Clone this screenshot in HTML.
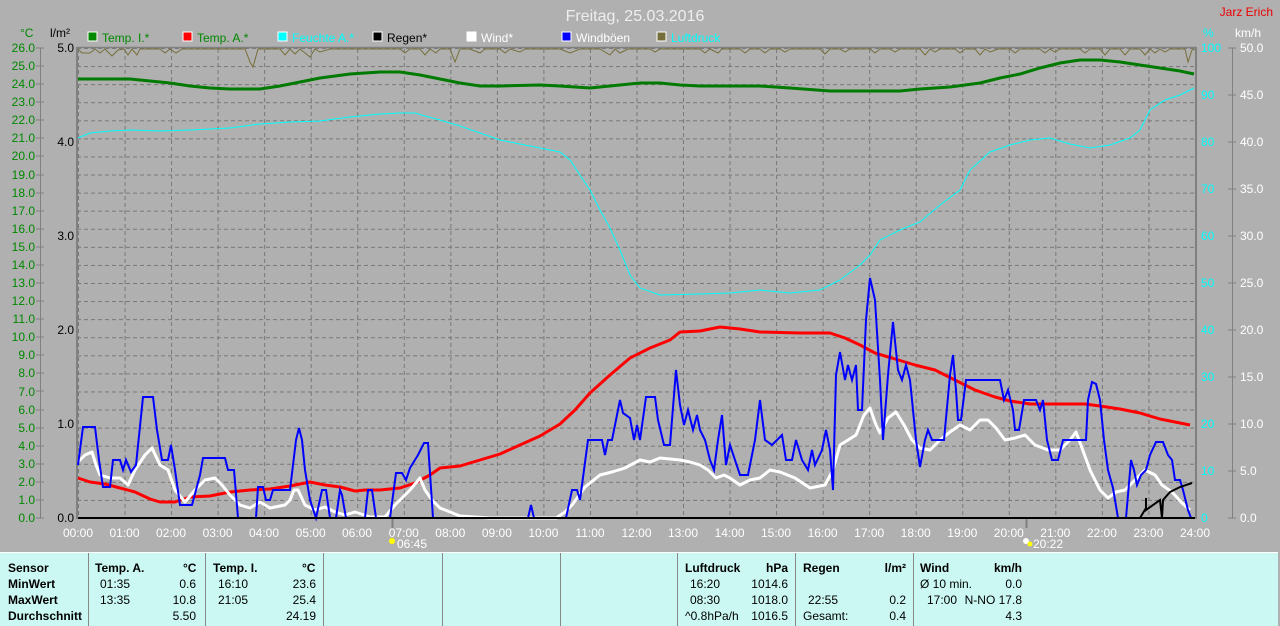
<!DOCTYPE html>
<html><head><meta charset="utf-8"><style>
html,body{margin:0;padding:0;width:1280px;height:625px;overflow:hidden;background:#b0b0b0}
svg{display:block;font-family:"Liberation Sans",sans-serif}
.p{position:absolute;left:0;top:552px;width:1278px;height:73px;background:#ccf8f4;border-top:1px solid #fff;font-family:"Liberation Sans",sans-serif;font-size:12px;color:#000}
.c{position:absolute;top:0;height:73px;border-left:1px solid #888}
.t{position:absolute;white-space:nowrap}
.b{font-weight:bold}
</style></head><body>
<svg width="1280" height="625" viewBox="0 0 1280 625">
<defs>
<pattern id="hg" x="0" y="48" width="1280" height="18.077" patternUnits="userSpaceOnUse"><line x1="0" y1="0.5" x2="1280" y2="0.5" stroke="#777" stroke-dasharray="4,3"/></pattern>
<pattern id="vg" x="78" y="0" width="46.54" height="625" patternUnits="userSpaceOnUse"><line x1="0.5" y1="0" x2="0.5" y2="625" stroke="#777" stroke-dasharray="4,3"/></pattern>
</defs>
<text x="635" y="21" fill="#eee" font-size="16" text-anchor="middle">Freitag, 25.03.2016</text>
<text x="1273" y="16" fill="#e00" font-size="12" text-anchor="end">Jarz Erich</text>
<g font-size="12">
<text x="20" y="37" fill="#080">°C</text><text x="50" y="37" fill="#000">l/m²</text>
<text x="1203" y="37" fill="#0ff">%</text><text x="1235" y="37" fill="#fff">km/h</text>
<rect x="88" y="32" width="9" height="9" fill="#080" stroke="#fff"/><text x="102" y="42" fill="#080">Temp. I.*</text>
<rect x="183" y="32" width="9" height="9" fill="#f00" stroke="#fff"/><text x="197" y="42" fill="#080">Temp. A.*</text>
<rect x="278" y="32" width="9" height="9" fill="#0ff" stroke="#fff"/><text x="292" y="42" fill="#0ff">Feuchte A.*</text>
<rect x="373" y="32" width="9" height="9" fill="#000" stroke="#fff"/><text x="387" y="42" fill="#000">Regen*</text>
<rect x="467" y="32" width="9" height="9" fill="#fff" stroke="#fff"/><text x="481" y="42" fill="#fff">Wind*</text>
<rect x="562" y="32" width="9" height="9" fill="#00f" stroke="#fff"/><text x="576" y="42" fill="#fff">Windböen</text>
<rect x="657" y="32" width="9" height="9" fill="#776f3a" stroke="#fff"/><text x="671" y="42" fill="#0ff">Luftdruck</text>
</g>
<rect x="78" y="48" width="1117" height="470" fill="url(#hg)"/>
<rect x="78" y="48" width="1117" height="470" fill="url(#vg)"/>
<line x1="77" y1="47" x2="77" y2="519" stroke="#808080" stroke-width="2"/>
<line x1="1196" y1="47" x2="1196" y2="519" stroke="#808080" stroke-width="2"/>
<line x1="77" y1="47.5" x2="1196" y2="47.5" stroke="#808080" stroke-width="1.5"/>
<line x1="40.5" y1="48" x2="40.5" y2="518" stroke="#808080"/>
<line x1="1232.5" y1="48" x2="1232.5" y2="518" stroke="#808080"/>
<g font-size="12" fill="#080" text-anchor="end">
<text x="35" y="52">26.0</text><text x="35" y="70">25.0</text><text x="35" y="88">24.0</text><text x="35" y="106">23.0</text><text x="35" y="124">22.0</text><text x="35" y="142">21.0</text><text x="35" y="160">20.0</text><text x="35" y="179">19.0</text><text x="35" y="197">18.0</text><text x="35" y="215">17.0</text><text x="35" y="233">16.0</text><text x="35" y="251">15.0</text><text x="35" y="269">14.0</text><text x="35" y="287">13.0</text><text x="35" y="305">12.0</text><text x="35" y="323">11.0</text><text x="35" y="341">10.0</text><text x="35" y="359">9.0</text><text x="35" y="377">8.0</text><text x="35" y="396">7.0</text><text x="35" y="414">6.0</text><text x="35" y="432">5.0</text><text x="35" y="450">4.0</text><text x="35" y="468">3.0</text><text x="35" y="486">2.0</text><text x="35" y="504">1.0</text><text x="35" y="522">0.0</text>
</g>
<path d="M36 48h8M36 66h8M36 84h8M36 102h8M36 120h8M36 138h8M36 156h8M36 175h8M36 193h8M36 211h8M36 229h8M36 247h8M36 265h8M36 283h8M36 301h8M36 319h8M36 337h8M36 355h8M36 373h8M36 391h8M36 410h8M36 428h8M36 446h8M36 464h8M36 482h8M36 500h8M36 518h8" stroke="#808080"/>
<g font-size="12" fill="#000" text-anchor="end">
<text x="74" y="52">5.0</text><text x="74" y="146">4.0</text><text x="74" y="240">3.0</text><text x="74" y="334">2.0</text><text x="74" y="428">1.0</text><text x="74" y="522">0.0</text>
</g>
<g font-size="12" fill="#0ff">
<text x="1201" y="52">100</text><text x="1201" y="99">90</text><text x="1201" y="146">80</text><text x="1201" y="193">70</text><text x="1201" y="240">60</text><text x="1201" y="287">50</text><text x="1201" y="334">40</text><text x="1201" y="381">30</text><text x="1201" y="428">20</text><text x="1201" y="475">10</text><text x="1201" y="522">0</text>
</g>
<path d="M1228 48h8M1228 95h8M1228 142h8M1228 189h8M1228 236h8M1228 283h8M1228 330h8M1228 377h8M1228 424h8M1228 471h8M1228 518h8" stroke="#808080"/>
<g font-size="12" fill="#fff">
<text x="1240" y="52">50.0</text><text x="1240" y="99">45.0</text><text x="1240" y="146">40.0</text><text x="1240" y="193">35.0</text><text x="1240" y="240">30.0</text><text x="1240" y="287">25.0</text><text x="1240" y="334">20.0</text><text x="1240" y="381">15.0</text><text x="1240" y="428">10.0</text><text x="1240" y="475">5.0</text><text x="1240" y="522">0.0</text>
</g>
<g font-size="12" fill="#fff" text-anchor="middle">
<text x="78" y="537">00:00</text><text x="124.5" y="537">01:00</text><text x="171" y="537">02:00</text><text x="217.6" y="537">03:00</text><text x="264" y="537">04:00</text><text x="310.7" y="537">05:00</text><text x="357" y="537">06:00</text><text x="403.8" y="537">07:00</text><text x="450.3" y="537">08:00</text><text x="496.9" y="537">09:00</text><text x="543.4" y="537">10:00</text><text x="590" y="537">11:00</text><text x="636.5" y="537">12:00</text><text x="683" y="537">13:00</text><text x="729.6" y="537">14:00</text><text x="776" y="537">15:00</text><text x="822.6" y="537">16:00</text><text x="869.2" y="537">17:00</text><text x="915.7" y="537">18:00</text><text x="962.3" y="537">19:00</text><text x="1008.8" y="537">20:00</text><text x="1055.3" y="537">21:00</text><text x="1101.9" y="537">22:00</text><text x="1148.4" y="537">23:00</text><text x="1195" y="537">24:00</text>
</g>
<line x1="392.5" y1="519" x2="392.5" y2="528" stroke="#808080" stroke-width="2"/>
<line x1="1026.5" y1="519" x2="1026.5" y2="528" stroke="#808080" stroke-width="2"/>
<circle cx="392" cy="541" r="3" fill="#ff0"/><text x="397" y="548" font-size="12" fill="#fff">06:45</text>
<circle cx="1026" cy="541" r="3" fill="#fff"/><circle cx="1030" cy="544" r="2.5" fill="#ff0"/><text x="1033" y="548" font-size="12" fill="#fff">20:22</text>
<polyline fill="none" stroke="#776f3a" stroke-width="1" points="78,49 82,53 90,53 95,49 100,53 105,49 112,56 118,50 124,49 128,55 132,49 137,55 140,49 160,49 165,53 170,49 176,53 182,49 190,49 245,49 250,62 253,67 258,49 280,49 285,55 290,49 295,54 300,49 310,57 315,49 320,52 330,49 400,49 405,53 410,49 420,49 425,55 430,49 436,53 440,49 450,49 455,62 460,49 470,49 480,53 485,49 500,49 505,53 510,49 520,52 525,49 560,49 570,53 580,49 600,49 610,55 615,49 620,53 628,49 650,49 655,52 660,49 700,49 705,53 710,49 718,53 722,49 740,49 745,53 750,49 760,49 765,53 770,49 780,49 785,52 790,49 820,49 825,54 830,49 840,49 845,52 850,49 870,49 875,53 880,49 890,49 895,52 900,49 920,49 925,55 930,49 935,52 940,49 955,49 960,53 965,49 975,49 980,55 985,49 990,52 998,49 1010,49 1015,53 1020,49 1040,49 1045,53 1050,49 1055,52 1060,49 1080,49 1085,53 1090,49 1100,49 1105,55 1110,49 1120,49 1125,55 1130,49 1140,49 1145,55 1150,49 1155,53 1160,49 1165,52 1170,49 1185,49 1188,62 1192,50 1195,49"/>
<polyline fill="none" stroke="#0b0" stroke-width="1" stroke-opacity="0" points="0,0"/>
<polyline fill="none" stroke="#0ff" stroke-width="1" points="78,138 90,133 110,131 130,130 160,131 190,130 230,128 260,124 290,122 320,121 350,117 380,114 400,113 415,113 425,116 440,120 460,126 480,133 500,140 520,144 545,149 560,152 570,160 580,175 590,190 600,210 610,228 620,250 630,275 640,288 660,295 700,294 730,293 760,290 790,293 820,290 840,280 860,265 870,255 880,240 900,230 920,222 940,205 960,190 970,170 990,152 1010,145 1030,140 1050,138 1070,144 1090,148 1110,145 1130,138 1140,130 1150,110 1165,100 1180,95 1194,88"/>
<polyline fill="none" stroke="#007a00" stroke-width="3" points="78,79 130,79 150,81 170,83 190,86 210,88 230,89 260,89 280,86 300,82 320,78 350,74 380,72 400,72 420,75 440,79 460,83 480,86 500,86 540,85 560,86 590,88 610,86 640,83 660,83 680,85 700,86 760,86 790,88 830,91 860,91 900,91 920,89 950,87 980,83 1000,78 1020,74 1040,68 1060,63 1080,60 1100,60 1120,62 1140,65 1160,68 1180,71 1194,74"/>
<polyline fill="none" stroke="#f00" stroke-width="3" stroke-linejoin="round" points="78,478 90,482 105,484 120,488 135,492 150,499 160,502 175,502 190,497 210,496 230,492 250,490 270,489 290,486 300,484 310,482 325,485 340,487 355,491 365,490 380,490 400,488 415,483 430,475 440,468 460,466 480,460 500,454 520,445 540,436 560,424 575,410 590,393 610,375 630,358 650,348 670,340 680,332 700,331 720,327 740,329 760,332 800,333 830,333 845,338 860,345 875,353 895,359 915,365 935,370 955,380 975,390 995,397 1010,401 1030,404 1060,404 1085,404 1100,406 1120,409 1140,413 1160,419 1175,422 1190,425"/>
<polyline fill="none" stroke="#fff" stroke-width="3" stroke-linejoin="round" points="78,462 85,455 92,452 96,465 100,475 110,478 120,478 128,485 135,470 145,455 152,448 160,465 168,470 175,490 185,502 195,490 205,480 215,478 222,485 230,495 240,505 250,508 260,502 270,508 285,505 290,500 294,490 298,490 305,505 315,510 325,507 335,512 345,515 355,512 370,517 385,517 395,505 410,490 420,478 425,490 432,500 440,508 460,516 490,518 556,518 565,512 572,505 585,487 600,475 612,472 625,468 640,460 650,462 660,458 680,460 690,462 700,465 708,470 716,478 724,475 730,478 740,485 750,480 760,478 770,470 780,472 795,478 810,488 825,485 833,470 840,445 848,440 856,435 864,415 870,408 876,425 880,433 888,418 896,412 904,425 912,440 920,448 930,450 940,440 950,432 960,425 970,430 980,420 988,420 996,428 1005,440 1015,438 1025,435 1035,445 1048,450 1060,450 1070,440 1076,432 1082,448 1090,470 1100,490 1108,498 1116,492 1125,490 1135,480 1145,470 1155,475 1162,485 1172,492 1182,503 1190,510"/>
<polyline fill="none" stroke="#00f" stroke-width="2" points="78,465 83,427 95,427 99,460 103,487 110,487 113,460 120,460 123,470 126,460 131,472 136,465 143,397 153,397 157,430 162,460 168,460 171,445 175,470 180,505 192,505 200,475 203,458 225,458 228,470 234,470 238,518 256,518 258,487 263,487 266,500 270,500 273,490 290,490 296,440 299,428 302,440 305,470 310,500 316,518 322,490 326,490 330,518 336,518 340,490 342,495 346,518 365,518 368,490 372,490 376,518 390,518 396,473 402,473 406,480 410,468 418,455 424,443 428,443 433,518 528,518 531,505 534,518 566,518 572,490 577,490 580,500 588,440 602,440 605,455 608,440 612,440 620,400 623,413 630,418 634,440 637,425 640,440 646,397 655,397 658,420 664,445 670,445 676,370 680,405 684,425 688,410 693,430 697,415 700,430 705,440 710,460 714,470 718,440 722,415 726,465 730,445 740,475 748,475 755,440 760,400 765,440 772,445 782,435 786,460 792,460 796,440 802,460 808,470 812,450 815,465 822,450 826,430 830,450 833,490 836,375 840,352 845,380 848,365 852,380 856,365 858,410 862,410 866,320 870,278 875,300 880,380 883,440 888,375 893,322 898,370 902,380 906,365 910,380 916,440 920,467 925,440 928,430 932,440 944,440 950,375 953,355 956,390 958,420 961,420 966,380 1000,380 1004,400 1008,390 1013,410 1015,430 1019,430 1024,400 1036,400 1040,410 1043,400 1047,440 1052,460 1058,460 1063,440 1086,440 1088,400 1092,382 1096,384 1100,400 1104,440 1108,470 1113,488 1118,518 1126,518 1128,495 1131,460 1134,470 1137,485 1141,475 1146,470 1150,455 1156,442 1163,442 1168,455 1172,460 1175,480 1180,480 1183,490 1188,510 1191,518 1195,518"/>
<line x1="78" y1="518" x2="1195" y2="518" stroke="#000" stroke-width="2"/>
<polyline fill="none" stroke="#000" stroke-width="2" points="1140,518 1146,508 1146,498 1146,510 1160,500 1162,518 1163,500 1170,492 1180,487 1192,483"/>
</svg>
<div class="p">
<div class="c" style="left:88px"></div><div class="c" style="left:205px"></div><div class="c" style="left:323px"></div><div class="c" style="left:442px"></div><div class="c" style="left:560px"></div><div class="c" style="left:677px"></div><div class="c" style="left:795px"></div><div class="c" style="left:913px"></div>
<div class="t b" style="left:8px;top:8px">Sensor</div>
<div class="t b" style="left:8px;top:24px">MinWert</div>
<div class="t b" style="left:8px;top:40px">MaxWert</div>
<div class="t b" style="left:8px;top:56px">Durchschnitt</div>
<div class="t b" style="left:95px;top:8px">Temp. A.</div><div class="t b" style="left:183px;top:8px">°C</div>
<div class="t" style="left:100px;top:24px">01:35</div><div class="t" style="right:1082px;top:24px">0.6</div>
<div class="t" style="left:100px;top:40px">13:35</div><div class="t" style="right:1082px;top:40px">10.8</div>
<div class="t" style="right:1082px;top:56px">5.50</div>
<div class="t b" style="left:213px;top:8px">Temp. I.</div><div class="t b" style="left:302px;top:8px">°C</div>
<div class="t" style="left:218px;top:24px">16:10</div><div class="t" style="right:962px;top:24px">23.6</div>
<div class="t" style="left:218px;top:40px">21:05</div><div class="t" style="right:962px;top:40px">25.4</div>
<div class="t" style="right:962px;top:56px">24.19</div>
<div class="t b" style="left:685px;top:8px">Luftdruck</div><div class="t b" style="right:490px;top:8px">hPa</div>
<div class="t" style="left:690px;top:24px">16:20</div><div class="t" style="right:490px;top:24px">1014.6</div>
<div class="t" style="left:690px;top:40px">08:30</div><div class="t" style="right:490px;top:40px">1018.0</div>
<div class="t" style="left:685px;top:56px">^0.8hPa/h</div><div class="t" style="right:490px;top:56px">1016.5</div>
<div class="t b" style="left:803px;top:8px">Regen</div><div class="t b" style="right:372px;top:8px">l/m²</div>
<div class="t" style="left:808px;top:40px">22:55</div><div class="t" style="right:372px;top:40px">0.2</div>
<div class="t" style="left:803px;top:56px">Gesamt:</div><div class="t" style="right:372px;top:56px">0.4</div>
<div class="t b" style="left:920px;top:8px">Wind</div><div class="t b" style="right:256px;top:8px">km/h</div>
<div class="t" style="left:920px;top:24px">Ø 10 min.</div><div class="t" style="right:256px;top:24px">0.0</div>
<div class="t" style="left:927px;top:40px">17:00</div><div class="t" style="right:256px;top:40px">N-NO 17.8</div>
<div class="t" style="right:256px;top:56px">4.3</div>
</div>
</body></html>
